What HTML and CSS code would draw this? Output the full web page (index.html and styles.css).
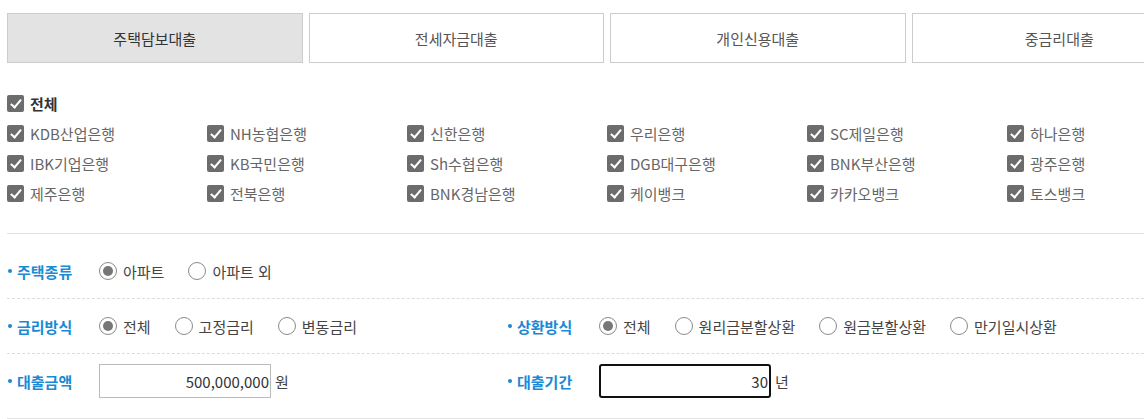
FILE: index.html
```html
<!DOCTYPE html>
<html lang="ko">
<head>
<meta charset="utf-8">
<title>대출 비교</title>
<link rel="stylesheet" href="styles.css">
</head>
<body>
<div class="wrap">
  <div class="tabs">
    <div class="tab active">주택담보대출</div>
    <div class="tab">전세자금대출</div>
    <div class="tab">개인신용대출</div>
    <div class="tab">중금리대출</div>
  </div>

  <div class="banks">
    <label class="chk all"><span class="box"></span>전체</label>
    <div class="grid">
      <label class="chk"><span class="box"></span>KDB산업은행</label>
      <label class="chk"><span class="box"></span>NH농협은행</label>
      <label class="chk"><span class="box"></span>신한은행</label>
      <label class="chk"><span class="box"></span>우리은행</label>
      <label class="chk"><span class="box"></span>SC제일은행</label>
      <label class="chk"><span class="box"></span>하나은행</label>
      <label class="chk"><span class="box"></span>IBK기업은행</label>
      <label class="chk"><span class="box"></span>KB국민은행</label>
      <label class="chk"><span class="box"></span>Sh수협은행</label>
      <label class="chk"><span class="box"></span>DGB대구은행</label>
      <label class="chk"><span class="box"></span>BNK부산은행</label>
      <label class="chk"><span class="box"></span>광주은행</label>
      <label class="chk"><span class="box"></span>제주은행</label>
      <label class="chk"><span class="box"></span>전북은행</label>
      <label class="chk"><span class="box"></span>BNK경남은행</label>
      <label class="chk"><span class="box"></span>케이뱅크</label>
      <label class="chk"><span class="box"></span>카카오뱅크</label>
      <label class="chk"><span class="box"></span>토스뱅크</label>
    </div>
  </div>

  <div class="form">
    <div class="row">
      <div class="half">
        <div class="label">주택종류</div>
        <div class="opts">
          <span class="opt"><span class="radio on"></span>아파트</span>
          <span class="opt"><span class="radio"></span>아파트 외</span>
        </div>
      </div>
    </div>
    <div class="row">
      <div class="half">
        <div class="label">금리방식</div>
        <div class="opts">
          <span class="opt"><span class="radio on"></span>전체</span>
          <span class="opt"><span class="radio"></span>고정금리</span>
          <span class="opt"><span class="radio"></span>변동금리</span>
        </div>
      </div>
      <div class="half">
        <div class="label">상환방식</div>
        <div class="opts">
          <span class="opt"><span class="radio on"></span>전체</span>
          <span class="opt"><span class="radio"></span>원리금분할상환</span>
          <span class="opt"><span class="radio"></span>원금분할상환</span>
          <span class="opt"><span class="radio"></span>만기일시상환</span>
        </div>
      </div>
    </div>
    <div class="row">
      <div class="half">
        <div class="label">대출금액</div>
        <div class="field"><span class="input">500,000,000</span><span class="unit">원</span></div>
      </div>
      <div class="half">
        <div class="label">대출기간</div>
        <div class="field"><span class="input focus">30</span><span class="unit">년</span></div>
      </div>
    </div>
  </div>
</div>
</body>
</html>
```

FILE: styles.css
```css
* { box-sizing: border-box; }
html, body { margin: 0; padding: 0; background: #fff; overflow: hidden; }
body {
  font-family: "Noto Sans CJK KR", "Noto Sans", sans-serif;
  font-size: 15px;
  color: #444;
}
.wrap { width: 1200px; margin-left: 7px; }

.tabs { display: flex; gap: 6px; margin-top: 13px; }
.tab {
  flex: 1;
  height: 50px;
  border: 1px solid #cccccc;
  display: flex;
  align-items: center;
  justify-content: center;
  color: #555;
  font-size: 15px;
}
.tab.active { background: #e3e3e3; color: #333; }

.banks { margin-top: 25px; padding-bottom: 25px; border-bottom: 1px solid #e2e2e2; }
.grid { display: grid; grid-template-columns: repeat(6, 200px); }
.chk {
  height: 30px;
  display: flex;
  align-items: center;
  color: #666;
  font-size: 15px;
  white-space: nowrap;
}
.chk.all { color: #333; font-weight: bold; }
.box {
  position: relative;
  width: 17px;
  height: 17px;
  border-radius: 2px;
  background: #6c6c6c;
  margin-right: 6px;
  flex: none;
}
.box::after {
  content: "";
  position: absolute;
  left: 6px;
  top: 2px;
  width: 4px;
  height: 9px;
  border-right: 2.5px solid #fff;
  border-bottom: 2.5px solid #fff;
  transform: rotate(40deg);
}

.form { padding: 10px 0; border-bottom: 1px solid #e2e2e2; width: 1137px; }
.row { display: flex; height: 55px; border-bottom: 1px dashed #dcdcdc; }
.row:last-child { height: 54px; border-bottom: none; }
.half { width: 500px; display: flex; align-items: center; flex: none; }
.half + .half { flex: 1; width: auto; }
.label {
  position: relative;
  width: 92px;
  padding-left: 10px;
  color: #1a8ad4;
  font-weight: bold;
  font-size: 15px;
  flex: none;
}
.label::before {
  content: "";
  position: absolute;
  left: 1px;
  top: 50%;
  margin-top: -2px;
  width: 4px;
  height: 4px;
  border-radius: 50%;
  background: #1a8ad4;
}
.opts { display: flex; align-items: center; white-space: nowrap; }
.opt {
  display: flex;
  align-items: center;
  margin-right: 24px;
  color: #444;
}
.radio {
  position: relative;
  width: 18px;
  height: 18px;
  border: 1px solid #8a8a8a;
  border-radius: 50%;
  margin-right: 6px;
  background: #fff;
  flex: none;
}
.radio.on::after {
  content: "";
  position: absolute;
  left: 3px;
  top: 3px;
  width: 10px;
  height: 10px;
  border-radius: 50%;
  background: #777;
}
.field { display: flex; align-items: center; }
.input {
  width: 172px;
  height: 34px;
  border: 1px solid #bbbbbb;
  display: flex;
  align-items: center;
  justify-content: flex-end;
  padding-right: 1px;
  color: #333;
  font-size: 15px;
}
.input.focus { border: 2px solid #111; border-radius: 3px; }
.unit { margin-left: 4px; color: #444; }
```
